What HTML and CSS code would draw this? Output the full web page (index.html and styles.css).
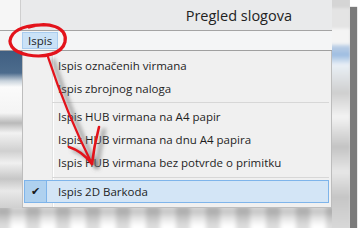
FILE: index.html
```html
<!DOCTYPE html>
<html>
  <head>
    <meta charset="UTF-8">
    <title>Pregled slogova</title>
    <link rel="stylesheet" href="styles.css">
  </head>
  <body>
    <div class="shot">
      <div class="window">
        <div class="titlebar"><span class="title">Pregled slogova</span></div>
        <div class="menubar"><span class="menu-head">Ispis</span></div>
        <div class="content">
          <div class="behind"></div>
          <ul class="dropdown">
            <li class="item">Ispis označenih virmana</li>
            <li class="item">Ispis zbrojnog naloga</li>
            <li class="sep"></li>
            <li class="item">Ispis HUB virmana na A4 papir</li>
            <li class="item">Ispis HUB virmana na dnu A4 papira</li>
            <li class="item">Ispis HUB virmana bez potvrde o primitku</li>
            <li class="sep low"></li>
            <li class="item checked"><span class="check">&#10004;</span>Ispis 2D Barkoda</li>
          </ul>
        </div>
        <div class="torn"><div class="smear"></div></div>
      </div>
      <div class="rim"><div class="smear"></div></div>

      <!-- red marks drawn over the screenshot -->
      <svg class="marks" width="350" height="228" viewBox="0 0 350 228">
        <defs>
          <filter id="soft" x="-20%" y="-20%" width="140%" height="140%">
            <feGaussianBlur stdDeviation="2"/>
          </filter>
        </defs>
        <g class="shade" filter="url(#soft)" transform="translate(5 3)">
          <path d="M48 57 Q66 112 92 164"/>
          <path d="M92 164 Q82 151 69 147"/>
          <path d="M92 164 Q94 146 99 127"/>
        </g>
        <path class="ring" d="M29 27 C48 21 68 27 65 42 C62 54 44 58 28 55 C12 52 6 43 13 34 C19 27 34 24 46 25"/>
        <g class="arrow">
          <path class="shaft" d="M48 57 Q66 112 92 164"/>
          <path d="M92 164 Q82 151 69 147"/>
          <path d="M92 164 Q94 146 99 127"/>
        </g>
      </svg>
    </div>
  </body>
</html>
```

FILE: styles.css
```css
* { margin: 0; padding: 0; box-sizing: border-box; }
body { background: #fff; font-family: "Open Sans", "Noto Sans", sans-serif; color: #1e1e1e; }

.shot { position: relative; display: flex; width: 350px; height: 228px; box-shadow: 7px 7px 1px #7b7b7b; }
.window { width: 332px; display: flex; flex-direction: column; }

.titlebar { height: 31px; display: flex; justify-content: flex-end; align-items: center; padding-right: 40px; border-bottom: 1px solid #a4a4a4; background: linear-gradient(90deg, #f6f6f6 0 20px, #cfcfcf 20px 21px, #e9eaeb 21px); }
.title { font-size: 14.5px; color: #222; }

.menubar { height: 20px; display: flex; padding: 1px 0 1px 22px; border-bottom: 1px solid #a0a0a0; background: #f4f5f6; }
.menu-head { padding: 0 5px; font-size: 11.5px; line-height: 15px; border: 1px solid #a9cdef; background: #cae2f7; }

.content { display: flex; height: 157px; }
.behind { width: 22px; background: linear-gradient(180deg, #3f5f82 0, #4d6c8d 22px, #c9d3dc 30px, #fbfbfb 36px, #f4f4f4 62px, #b9b9b9 72px, #f2f2f2 82px, #d0d0d0 100px, #f0f0f0 112px, #c6c6c6 128px, #e9e9e9 140px, #cfcfcf 157px); }

.dropdown { width: 310px; list-style: none; padding: 3px 0 2px; border: 1px solid #bdbdbd; border-top: none; background: linear-gradient(90deg, transparent 29px, #e2e3e3 29px 30px, #fff 30px 31px, transparent 31px), #f0f0f0; }
.item { height: 23px; display: flex; align-items: center; padding-left: 35px; font-size: 11.5px; }
.sep { height: 1px; margin: 2px 2px 2px 29px; background: #d7d7d7; }
.sep.low { margin-top: 3px; }

.checked { margin: 2px 2px 0 1px; padding-left: 0; border: 1px solid #7eb4ea; background: #d3e5f6; }
.check { width: 22px; height: 100%; display: flex; align-items: center; justify-content: center; margin-right: 11px; border-right: 1px solid #7eb4ea; background: #afd1ef; font-family: "DejaVu Sans", sans-serif; font-size: 11px; color: #1a1a1a; }

.torn { flex: 1; overflow: hidden; position: relative; background: #d6d6d6; }
.torn .smear { position: absolute; inset: -4px; filter: blur(2px); background: linear-gradient(180deg, #e6e6e6 0, #c2c2c2 8px, #dcdcdc 12px, #f2f2f2 18px, #ffffff 22px), repeating-linear-gradient(90deg, rgba(120,120,120,.25) 0 14px, rgba(255,255,255,.2) 14px 30px); background-blend-mode: multiply; }

.rim { width: 18px; overflow: hidden; position: relative; background: #dcdcdc; }
.rim .smear { position: absolute; inset: -3px 0 -3px -3px; filter: blur(1px); background: linear-gradient(180deg, #d5d5d5 0 10px, #e4e4e4 12px 30px, #f4f4f4 33px 46px, #b9cde5 50px, #9ebde1 58px, #eaf0f6 68px, #cfcfcf 96px, #f3f3f3 120px, #c4c4c4 150px, #e7e7e7 175px, #c6c6c6 200px, #d9d9d9 232px); }

.marks { position: absolute; left: 0; top: 0; pointer-events: none; }
.marks path { fill: none; stroke-linecap: round; }
.ring { stroke: #e3131b; stroke-width: 3.2; }
.arrow path { stroke: #e3131b; stroke-width: 2.6; }
.arrow .shaft { stroke-width: 2.3; }
.shade path { stroke: #666; stroke-width: 3.5; opacity: .65; }
```
